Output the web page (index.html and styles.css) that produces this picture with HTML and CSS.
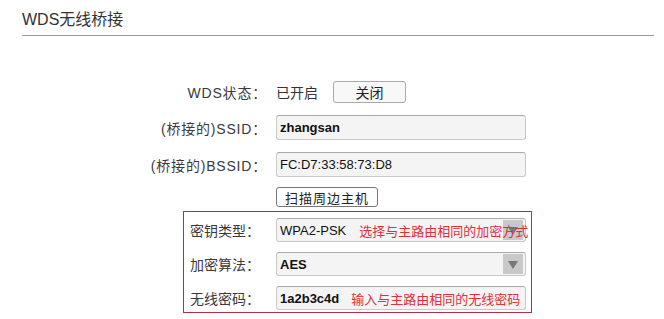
FILE: index.html
```html
<!DOCTYPE html>
<html lang="zh-CN">
<head>
  <meta charset="UTF-8" />
  <title>WDS无线桥接</title>
  <link rel="stylesheet" href="styles.css">
</head>
<body>

  <h2 class="title">WDS无线桥接</h2>

  <div class="form">
    <div class="row row-status">
      <span class="label">WDS状态：</span>
      <span class="value">已开启</span>
      <button class="btn btn-close">关闭</button>
    </div>

    <div class="row row-field">
      <span class="label">(桥接的)SSID：</span>
      <div class="field"><span class="strong">zhangsan</span></div>
    </div>

    <div class="row row-field">
      <span class="label">(桥接的)BSSID：</span>
      <div class="field">FC:D7:33:58:73:D8</div>
    </div>

    <div class="row row-scan">
      <span class="label"></span>
      <button class="btn btn-scan">扫描周边主机</button>
    </div>

    <div class="box">
      <div class="row row-select">
        <span class="label">密钥类型：</span>
        <div class="field select">
          WPA2-PSK
          <span class="hint hint-first">选择与主路由相同的加密方式</span>
          <span class="arrow"></span>
        </div>
      </div>

      <div class="row row-select">
        <span class="label">加密算法：</span>
        <div class="field select">
          <span class="strong">AES</span>
          <span class="arrow"></span>
        </div>
      </div>

      <div class="row row-select">
        <span class="label">无线密码：</span>
        <div class="field">
          <span class="strong">1a2b3c4d</span>
          <span class="hint">输入与主路由相同的无线密码</span>
        </div>
      </div>
    </div>
  </div>

</body>
</html>
```

FILE: styles.css
```css
body {
  margin: 0;
  padding: 0 10px 0 22px;
  font-family: "Liberation Sans", Arial, "Noto Sans CJK SC", sans-serif;
  color: #333;
  background: #fff;
}

.title {
  margin: 0;
  padding: 10px 0 5px;
  font-size: 16px;
  font-weight: normal;
  line-height: 20px;
  color: #333;
  border-bottom: 1px solid #999;
}

.form {
  margin-top: 45px;
  font-size: 14px;
}

.row {
  display: flex;
  align-items: center;
}

.label {
  box-sizing: border-box;
  width: 254px;
  padding-right: 9px;
  text-align: right;
  white-space: nowrap;
  letter-spacing: 0.8px;
  color: #3a3a3a;
}

.row-status {
  height: 22px;
}

.value {
  margin-right: 15px;
}

.btn {
  font-family: "Liberation Sans", "Noto Sans CJK SC", sans-serif;
  font-size: 14px;
  color: #222;
  cursor: pointer;
  padding: 0;
}

.btn-close {
  width: 73px;
  height: 22px;
  background: #f8f8f8;
  border: 1px solid #aaa;
  border-radius: 3px;
}

.row-field {
  margin-top: 12px;
  height: 25px;
}

.field {
  position: relative;
  box-sizing: border-box;
  display: flex;
  align-items: center;
  width: 250px;
  height: 100%;
  padding-left: 3px;
  font-size: 13px;
  color: #111;
  background: #f4f4f4;
  border: 1px solid #c9c9c9;
  border-top-color: #aaa;
  border-radius: 3px;
  white-space: nowrap;
}

.strong {
  font-weight: bold;
}

.row-scan {
  margin-top: 10px;
  height: 20px;
}

.btn-scan {
  width: 102px;
  height: 20px;
  background: #fdfdfd;
  border: 1px solid #777;
  border-radius: 3px;
  font-size: 13px;
  letter-spacing: 1px;
}

.box {
  box-sizing: border-box;
  width: 349px;
  margin: 4px 0 0 161px;
  padding: 6px 5px 2px 6px;
  border: 1px solid #b0303f;
}

.box .label {
  width: 86px;
  text-align: left;
  letter-spacing: 0;
}

.row-select {
  height: 24px;
  margin-top: 10px;
}

.row-select:first-child {
  margin-top: 0;
}

.hint {
  position: relative;
  z-index: 1;
  margin-left: 12px;
  font-size: 13px;
  color: #e0303a;
}

.hint-first {
  margin-left: 13px;
}

.arrow {
  position: absolute;
  top: 1px;
  right: 2px;
  width: 20px;
  height: 20px;
  background: #c8c8c8;
}

.arrow::after {
  content: "";
  position: absolute;
  left: 5px;
  top: 7px;
  border-left: 5px solid transparent;
  border-right: 5px solid transparent;
  border-top: 8px solid #777;
}
```
